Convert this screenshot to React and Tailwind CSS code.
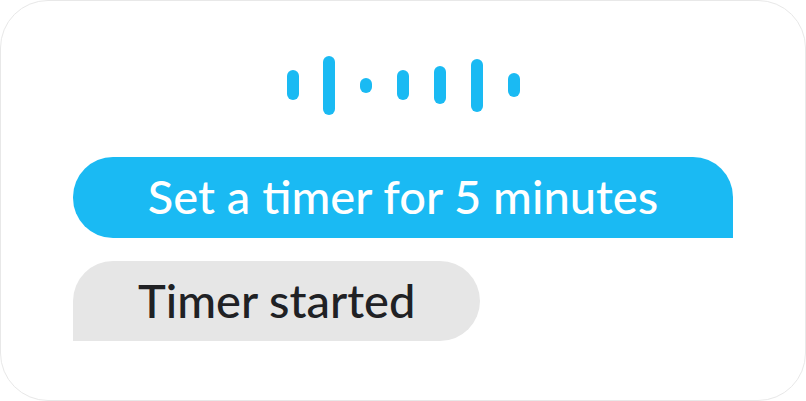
const bars = [
  { x: 287, y: 70, h: 30 },
  { x: 323, y: 56, h: 59 },
  { x: 360, y: 78, h: 15 },
  { x: 397, y: 70, h: 30 },
  { x: 434, y: 66, h: 38 },
  { x: 471, y: 59, h: 53 },
  { x: 508, y: 73, h: 24 },
];

export default function App() {
  return (
    <main className="flex min-h-screen flex-col rounded-[48px] border border-[#e8e8e8] bg-white px-[72px] pt-[54px] pb-14 font-['Lato',sans-serif] font-medium">
      <svg className="h-[60px] w-[234px] self-center" viewBox="286 55 234 60" fill="#1abaf3" role="img" aria-label="Voice input">
        {bars.map((b) => (
          <rect key={b.x} x={b.x} y={b.y} width="12" height={b.h} rx="6" />
        ))}
      </svg>
      <p className="mt-[42px] rounded-t-[40px] rounded-bl-[40px] bg-[#1abaf3] pb-0.5 text-center text-[47px] leading-[79px] whitespace-nowrap text-white">
        Set a timer for 5 minutes
      </p>
      <p className="mt-[23px] self-start rounded-t-[40px] rounded-br-[40px] bg-[#e6e6e6] px-[65px] pb-0.5 text-[47px] leading-[78px] whitespace-nowrap text-[#202124]">
        Timer started
      </p>
    </main>
  );
}
